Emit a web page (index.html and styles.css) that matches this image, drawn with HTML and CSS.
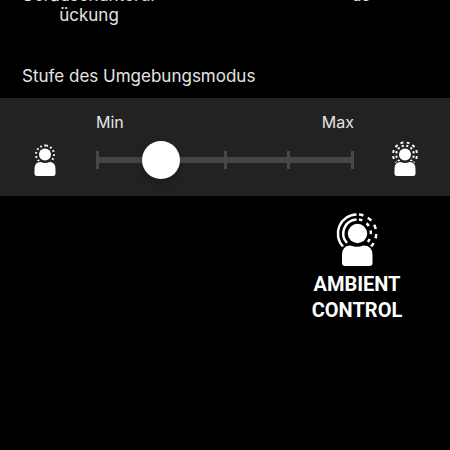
FILE: index.html
```html
<!DOCTYPE html>
<html lang="de">
<head>
<meta charset="utf-8">
<meta name="viewport" content="width=device-width, initial-scale=1">
<title>Umgebungsmodus</title>
<link rel="stylesheet" href="styles.css">
</head>
<body>
<main>
  <div class="modes">
    <div class="mode">Geräuschunterdr<br>ückung</div>
    <div class="mode mode-last">us</div>
  </div>

  <h2 class="heading"><label for="level">Stufe des Umgebungsmodus</label></h2>

  <section class="panel">
    <svg class="person" viewBox="0 0 40 40" aria-hidden="true">
      <circle class="dots" cx="20" cy="19.5" r="9" pathLength="360"/>
      <circle cx="20" cy="19.5" r="6"/>
      <path class="body" d="M9.500 38.5V34Q9.500 27 15.5 27Q20 29 24.5 27Q30.500 27 30.500 34V38.5Q30.500 41 28 41H12Q9.500 41 9.500 38.5Z"/>
    </svg>
    <div class="control">
      <div class="ends"><span>Min</span><span>Max</span></div>
      <div class="scale">
        <div class="ticks"><i></i><i></i><i></i><i></i><i></i></div>
        <input class="slider" id="level" type="range" min="0" max="4" step="1" value="1">
      </div>
    </div>
    <svg class="person" viewBox="0 0 40 40" aria-hidden="true">
      <circle class="dashes inner" cx="20" cy="19.5" r="8.8" pathLength="360"/>
      <circle class="dashes outer" cx="20" cy="19.5" r="12" pathLength="360"/>
      <circle cx="20" cy="19.5" r="6"/>
      <path class="body" d="M9.500 38.5V34Q9.500 27 15.5 27Q20 29 24.5 27Q30.500 27 30.500 34V38.5Q30.500 41 28 41H12Q9.500 41 9.500 38.5Z"/>
    </svg>
  </section>

  <div class="brand">
    <svg class="brand-icon" viewBox="0 0 44 54" aria-hidden="true">
      <g class="arcs">
        <path d="M21.500 1.500A19 19 0 0 0 8 33.500"/>
        <path d="M21.500 6.500A14 14 0 0 0 12 30"/>
        <path class="broken-outer" d="M24 1.500A19 19 0 0 1 36 33.500"/>
        <path class="broken-inner" d="M24 6.500A14 14 0 0 1 32 30"/>
      </g>
      <circle cx="22.5" cy="20.5" r="9.700"/>
      <path d="M7 50V42Q7 32.500 15.500 32.500Q22 35 28.500 32.500Q37.500 32.500 37.500 42V50Q37.500 53 34.500 53H10Q7 53 7 50Z"/>
    </svg>
    <div class="brand-name">AMBIENT<br>CONTROL</div>
  </div>
</main>
</body>
</html>
```
FILE: styles.css
```css
* {
  box-sizing: border-box;
}

body {
  margin: 0;
  background: #000;
  color: #e4e4e4;
  font: 16px/20px Inter, "Liberation Sans", sans-serif;
  overflow: hidden;
}

main {
  overflow: hidden;
}

/* The mode labels are scrolled partly out of view */
.modes {
  display: grid;
  grid-template-columns: repeat(3, 1fr);
  margin-top: -15px;
  padding: 0 21px;
  font-size: 17px;
  text-align: center;
}

.mode-last {
  grid-column: 3;
}

.heading {
  margin: 41px 0 12px;
  padding: 0 22px;
  font-size: 17px;
  font-weight: 400;
}

.panel {
  display: grid;
  grid-template-columns: 90px 1fr 90px;
  padding: 14px 0;
  background: #222;
}

.person {
  width: 40px;
  height: 40px;
  margin-top: 23px;
  justify-self: center;
  fill: #fff;
  overflow: visible;
}

.dots {
  fill: none;
  stroke: #fff;
  stroke-width: 2;
  stroke-dasharray: 11 15.7;
  transform: rotate(-82deg);
  transform-origin: 20px 19.5px;
}

.dashes {
  fill: none;
  stroke: #fff;
  stroke-width: 2;
  stroke-dasharray: 14 16;
  transform: rotate(-82deg);
  transform-origin: 20px 19.5px;
}

.person .body {
  stroke: #222;
  stroke-width: 2;
  paint-order: stroke;
}

.control {
  padding: 0 6px;
}

.ends {
  display: flex;
  justify-content: space-between;
}

.scale {
  display: grid;
  height: 50px;
  align-items: center;
  padding-top: 6px;
}

.ticks,
.slider {
  grid-area: 1 / 1;
}

.ticks {
  display: flex;
  justify-content: space-between;
  height: 18px;
  background: linear-gradient(#464646, #464646) center / 100% 6px no-repeat;
}

.ticks i {
  width: 3px;
  background: #484848;
}

.slider {
  appearance: none;
  height: 38px;
  margin: 0 -18px;
  background: none;
}

.slider::-webkit-slider-thumb {
  appearance: none;
  width: 38px;
  height: 38px;
  border-radius: 50%;
  background: #fff;
  box-shadow: 0 4px 8px rgb(0 0 0 / 20%);
}

.brand {
  width: 92px;
  margin: 17px 47px 0 auto;
  color: #fff;
  text-align: center;
}

.brand-icon {
  display: block;
  width: 44px;
  height: 54px;
  margin: 0 auto 4px;
  fill: #fff;
}

.arcs {
  fill: none;
  stroke: #fff;
  stroke-width: 2.5;
}

.broken-outer {
  stroke-dasharray: 4.5 5;
}

.broken-inner {
  stroke-dasharray: 3.5 5;
}

.brand-name {
  font: 700 20px/26px Roboto, sans-serif;
}
```
